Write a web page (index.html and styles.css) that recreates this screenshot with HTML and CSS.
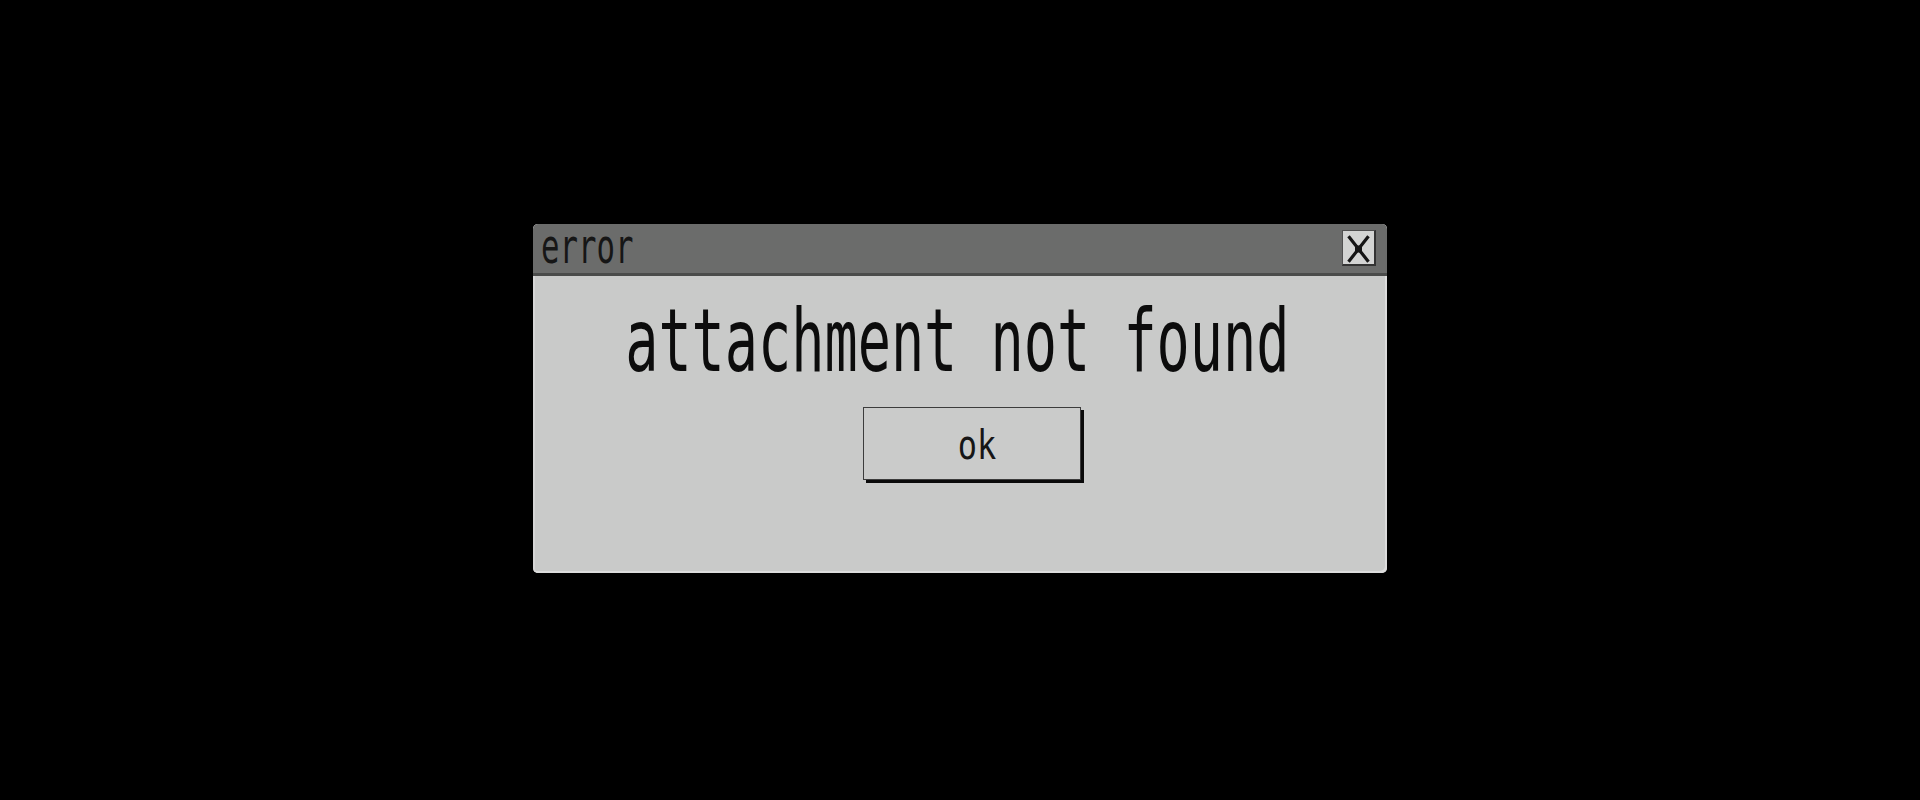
FILE: index.html
```html
<!DOCTYPE html>
<html>
<head>
<meta charset="utf-8">
<link rel="stylesheet" href="styles.css">
</head>
<body>
<div class="screen">
  <div class="dialog">
    <div class="titlebar">
      <span class="title">error</span>
      <div class="close">
        <svg viewBox="0 0 34 36" width="34" height="36">
          <path d="M7.5 7.5 L16.5 19 L25.5 7.5 M7.5 30.5 L16.5 19 L25.5 30.5" stroke="#151515" stroke-width="3.2" fill="none" stroke-linecap="square"/>
          <rect x="13" y="15.5" width="7" height="7" fill="#151515"/>
        </svg>
      </div>
    </div>
    <div class="content">
      <div class="message"><span class="message-text">attachment not found</span></div>
      <div class="ok-button"><span class="ok-text">ok</span></div>
    </div>
  </div>
</div>
</body>
</html>
```

FILE: styles.css
```css
html, body {
  margin: 0;
  padding: 0;
  background: #000;
}

.screen {
  width: 1920px;
  height: 800px;
  display: flex;
  align-items: center;
  justify-content: center;
}

.dialog {
  width: 854px;
  height: 349px;
  margin-top: -3px;
  background: #c9cac9;
  border-radius: 5px;
  display: flex;
  flex-direction: column;
  box-shadow: inset -2px -2px 0 #dcdcdc, inset 2px 0 0 #d6d6d6;
}

.titlebar {
  height: 49px;
  flex: none;
  background: #6b6c6b;
  border-bottom: 3px solid #4a4b4a;
  border-radius: 5px 5px 0 0;
  display: flex;
  justify-content: space-between;
  align-items: flex-start;
  padding: 0 11px 0 8px;
}

.title {
  font-family: "DejaVu Sans Mono", monospace;
  font-size: 48px;
  line-height: 45px;
  color: #161616;
  display: inline-block;
  transform: scaleX(0.64);
  transform-origin: left center;
}

.close {
  width: 34px;
  height: 36px;
  margin-top: 6px;
  box-sizing: border-box;
  background: #d3d4d3;
  border: 1px solid #505050;
  border-right-width: 2px;
  border-bottom-width: 2px;
  border-right-color: #333;
  border-bottom-color: #333;
  display: flex;
  align-items: center;
  justify-content: center;
}

.close svg {
  display: block;
  flex: none;
}

.content {
  display: flex;
  flex-direction: column;
  align-items: center;
}

.message {
  margin-top: 33px;
  height: 64px;
  display: flex;
  justify-content: center;
}

.message-text {
  font-family: "DejaVu Sans Mono", monospace;
  font-size: 64px;
  line-height: 64px;
  color: #0c0c0c;
  white-space: nowrap;
  display: inline-block;
  transform: scale(0.862, 1.375);
  transform-origin: center center;
  margin-left: -6px;
}

.ok-button {
  margin-top: 34px;
  margin-left: 24px;
  width: 218px;
  height: 73px;
  box-sizing: border-box;
  border: 1px solid #3c3c3c;
  background: #cacbca;
  box-shadow: 3px 3px 0 #0a0a0a;
  display: flex;
  justify-content: center;
  padding-left: 10px;
  padding-top: 4px;
}

.ok-text {
  font-family: "DejaVu Sans Mono", monospace;
  font-size: 40px;
  line-height: 67px;
  color: #161616;
  display: inline-block;
  transform: scaleX(0.8);
}
```
